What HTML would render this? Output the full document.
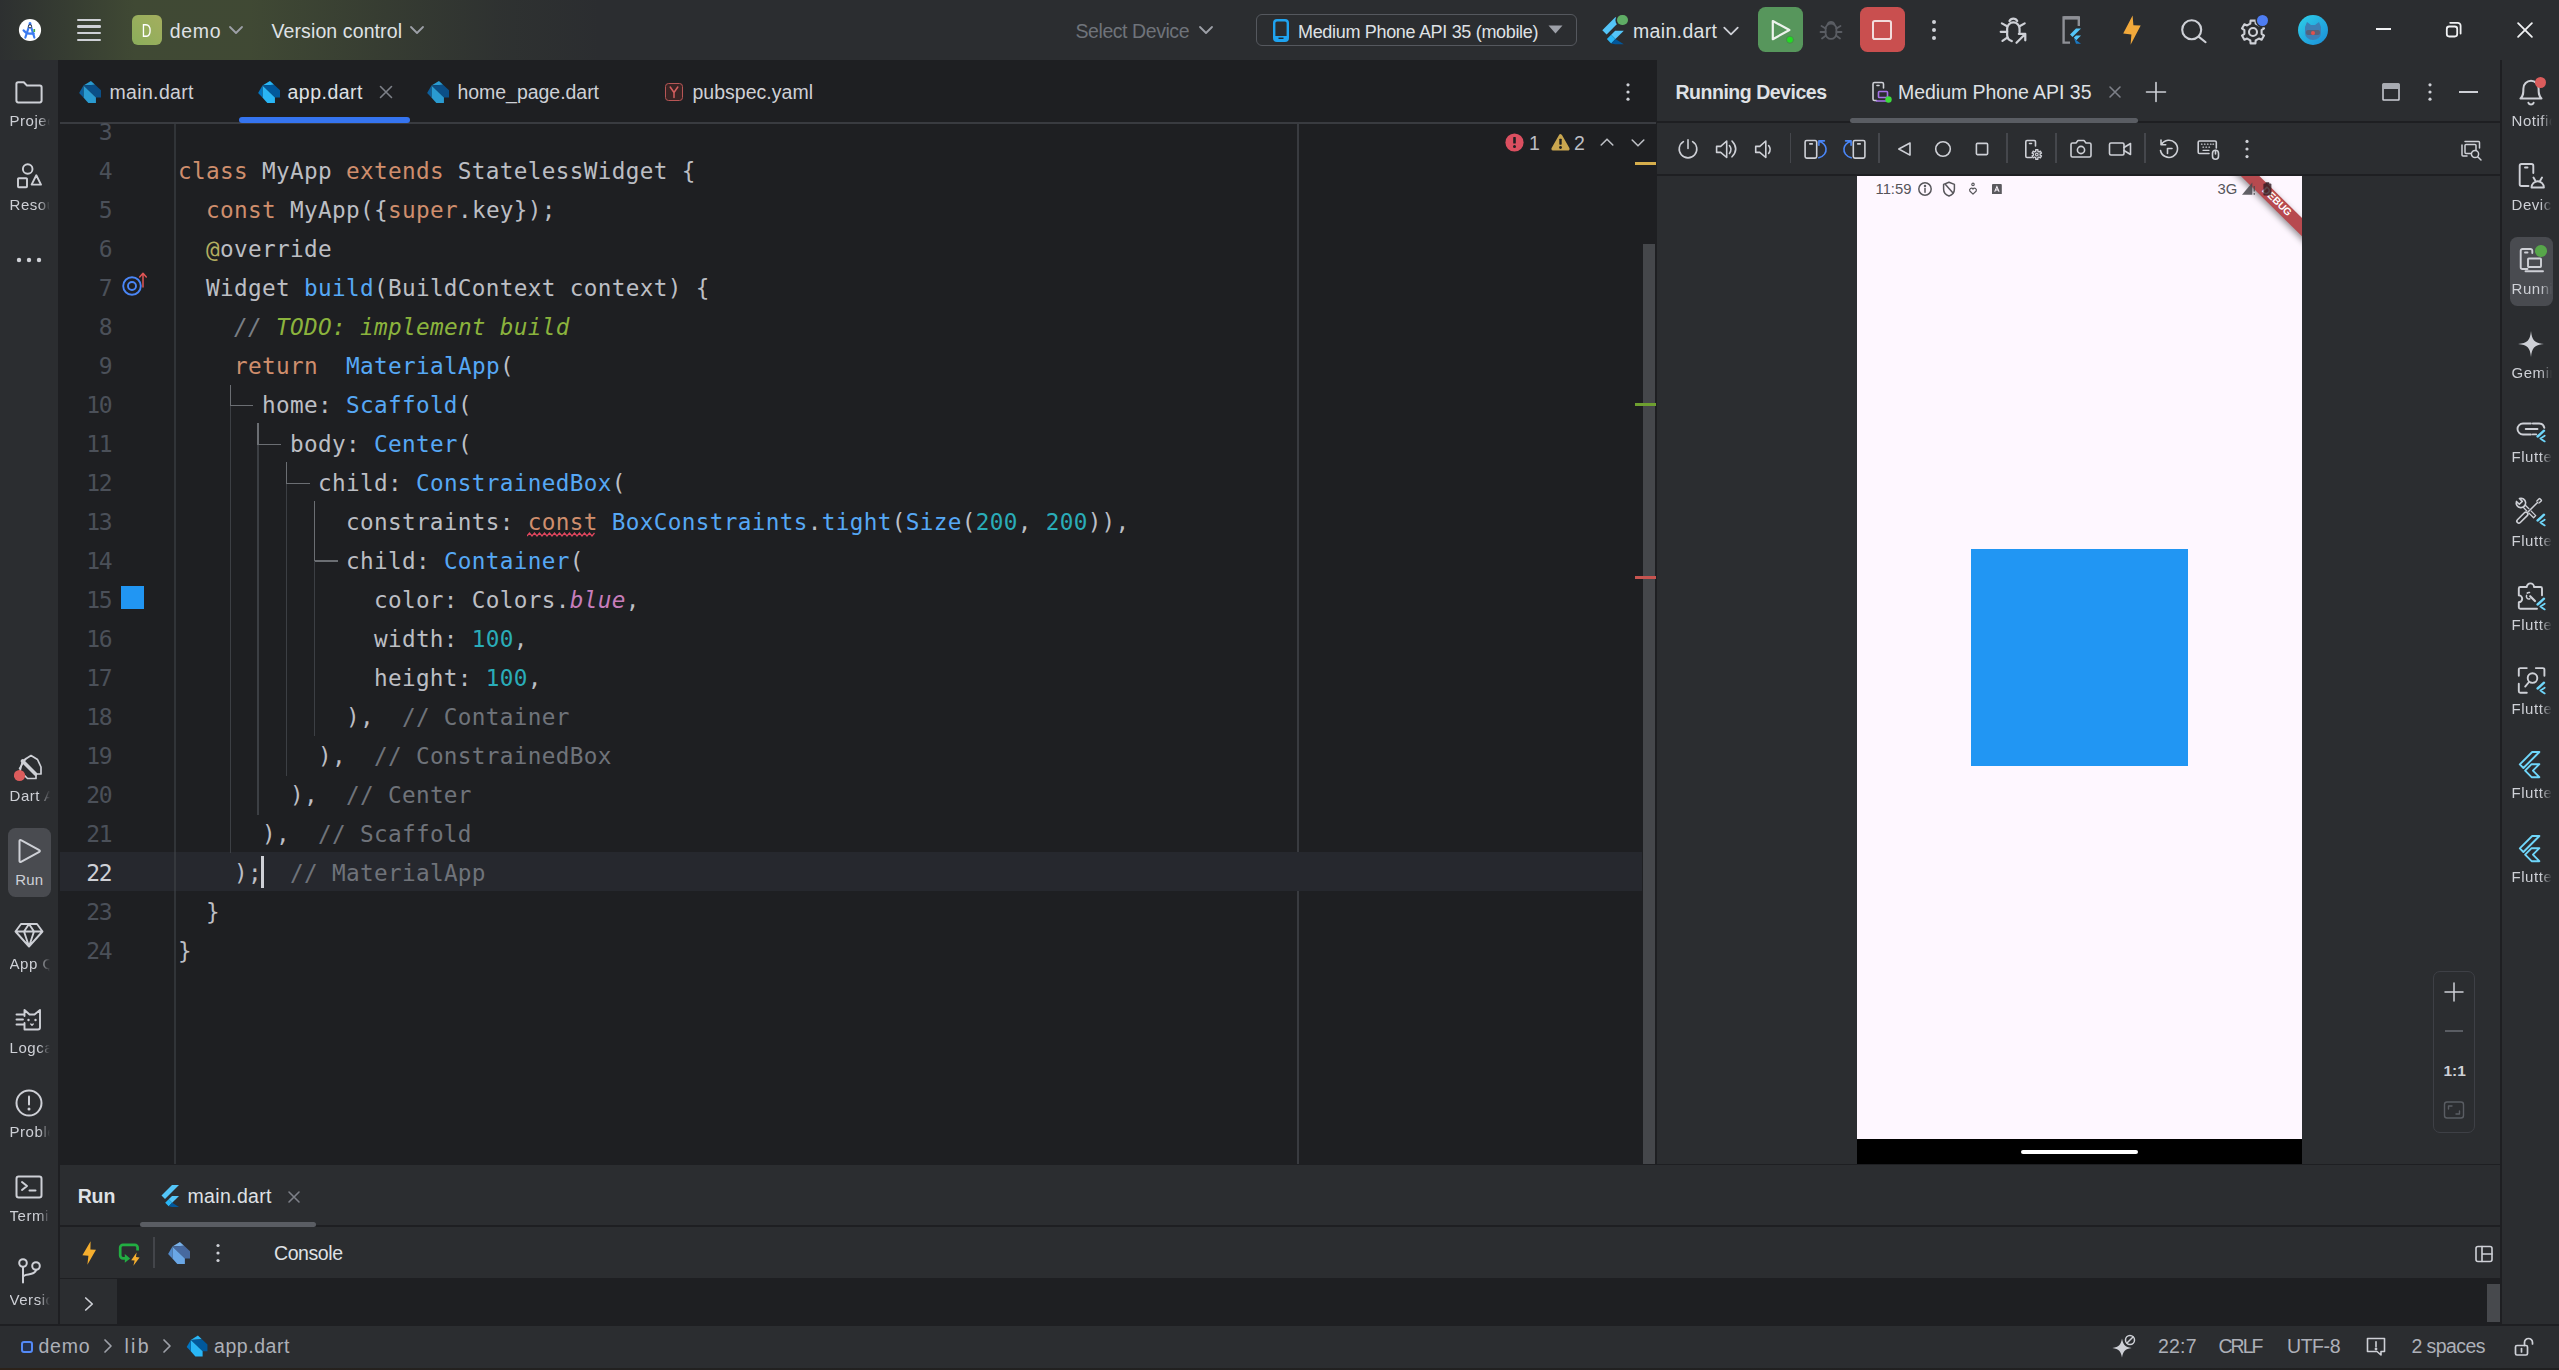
<!DOCTYPE html>
<html lang="en"><head><meta charset="utf-8"><title>demo – app.dart</title>
<style>
html,body{margin:0;padding:0;background:#2B2D30;}
body{width:2559px;height:1370px;position:relative;overflow:hidden;font-family:"Liberation Sans", "DejaVu Sans", sans-serif;font-size:19.5px;color:#DFE1E5;}
body div, body span.t, body svg, body pre{position:absolute;}
span.t{white-space:pre;}
pre{margin:0;font-family:"DejaVu Sans Mono", "Liberation Mono", monospace;font-size:22.7px;letter-spacing:0.334px;line-height:39px;white-space:pre;color:#BCBEC4;}
pre i{font-style:italic;}
pre b{font-weight:400;}
.k{color:#CF8E6D} .f{color:#56A8F5} .n{color:#2AACB8} .c{color:#7A7E85} .h{color:#6F737A} .td{color:#8BB33D} .a{color:#B3AE60} .p{color:#C77DBB}
</style></head>
<body>
<div style="left:0px;top:0px;width:2559px;height:60px;background:#2B2D30;"></div>
<div style="left:0px;top:0px;width:700px;height:60px;background:linear-gradient(90deg, rgba(68,80,52,0.08) 0px, rgba(68,80,52,0.4) 60px, rgba(69,80,53,0.8) 135px, rgba(69,80,53,0.8) 250px, rgba(66,76,52,0.5) 380px, rgba(60,68,52,0.2) 500px, rgba(55,60,52,0) 600px);"></div>
<div style="left:0px;top:60px;width:58px;height:1266px;background:#2B2D30;"></div>
<div style="left:58px;top:60px;width:2px;height:1266px;background:#1E1F22;"></div>
<div style="left:60px;top:60px;width:1596px;height:1104px;background:#1E1F22;"></div>
<div style="left:60px;top:122px;width:1596px;height:2px;background:#393B40;"></div>
<div style="left:1656px;top:60px;width:1px;height:1104px;background:#1E1F22;"></div>
<div style="left:1657px;top:60px;width:843px;height:1104px;background:#2B2D30;"></div>
<div style="left:1657px;top:121.2px;width:843px;height:1.8px;background:#1E1F22;"></div>
<div style="left:1657px;top:174px;width:843px;height:1.5px;background:#1E1F22;"></div>
<div style="left:2500px;top:60px;width:2px;height:1266px;background:#1E1F22;"></div>
<div style="left:2502px;top:60px;width:57px;height:1266px;background:#2B2D30;"></div>
<div style="left:60px;top:1164px;width:2440px;height:1px;background:#1E1F22;"></div>
<div style="left:60px;top:1165px;width:2440px;height:160px;background:#2B2D30;"></div>
<div style="left:60px;top:1225px;width:2440px;height:1.5px;background:#1E1F22;"></div>
<div style="left:60px;top:1277.5px;width:2440px;height:1.5px;background:#1E1F22;"></div>
<div style="left:117px;top:1278px;width:2383px;height:46px;background:#1E1F22;"></div>
<div style="left:0px;top:1324px;width:2559px;height:2px;background:#1E1F22;"></div>
<div style="left:0px;top:1326px;width:2559px;height:42px;background:#2B2D30;"></div>
<div style="left:0px;top:1368.3px;width:2559px;height:1.7px;background:linear-gradient(90deg,#2c2219 0,#222120 520px,#202021 100%);"></div>
<div style="left:132px;top:15px;width:30px;height:30px;border-radius:6px;background:linear-gradient(45deg,#8BAE5B,#A4AE5E);"></div>
<span class="t" style="left:140px;top:16.0px;line-height:30px;font-size:18.5px;color:#FFFFFF;transform:scaleX(0.72);transform-origin:50% 50%;">D</span>
<span class="t" style="left:169.7px;top:16.0px;line-height:30px;font-size:19.5px;color:#DFE1E5;letter-spacing:0.674px;">demo</span>
<span class="t" style="left:271.5px;top:16.0px;line-height:30px;font-size:19.5px;color:#DFE1E5;letter-spacing:0.108px;">Version control</span>
<span class="t" style="left:1075.5px;top:16.0px;line-height:30px;font-size:19.5px;color:#6F737A;letter-spacing:-0.435px;">Select Device</span>
<div style="left:1256px;top:14px;width:319px;height:30px;border:1.5px solid #55585E;border-radius:6px;"></div>
<span class="t" style="left:1298px;top:16.5px;line-height:30px;font-size:18px;color:#DFE1E5;letter-spacing:-0.32px;">Medium Phone API 35 (mobile)</span>
<span class="t" style="left:1633px;top:16.0px;line-height:30px;font-size:19.5px;color:#DFE1E5;letter-spacing:0.339px;">main.dart</span>
<div style="left:1758px;top:7.3px;width:44.8px;height:45px;border-radius:7.5px;background:#57965C;"></div>
<div style="left:1860px;top:7.3px;width:44.9px;height:45px;border-radius:7.5px;background:#C94F4F;"></div>
<span class="t" style="left:109.5px;top:77.4px;line-height:30px;font-size:19.5px;color:#CED0D6;letter-spacing:0.339px;">main.dart</span>
<span class="t" style="left:287.5px;top:77.4px;line-height:30px;font-size:19.5px;color:#DFE1E5;letter-spacing:0.492px;">app.dart</span>
<span class="t" style="left:457.5px;top:77.4px;line-height:30px;font-size:19.5px;color:#CED0D6;letter-spacing:-0.04px;">home_page.dart</span>
<span class="t" style="left:692.5px;top:77.4px;line-height:30px;font-size:19.5px;color:#CED0D6;letter-spacing:0.017px;">pubspec.yaml</span>
<div style="left:238.5px;top:117px;width:171px;height:5.5px;border-radius:3px;background:#3574F0;"></div>
<span class="t" style="left:1675.5px;top:77.4px;line-height:30px;font-size:19.5px;color:#DFE1E5;font-weight:700;letter-spacing:-0.479px;">Running Devices</span>
<span class="t" style="left:1898px;top:77.4px;line-height:30px;font-size:19.5px;color:#DFE1E5;letter-spacing:-0.03px;">Medium Phone API 35</span>
<div style="left:1850px;top:118px;width:288px;height:4.5px;border-radius:2.5px;background:#5A5D63;"></div>
<span class="t" style="left:77.7px;top:1181.0px;line-height:30px;font-size:19.5px;color:#DFE1E5;font-weight:700;letter-spacing:-0.153px;">Run</span>
<span class="t" style="left:187.5px;top:1181.0px;line-height:30px;font-size:19.5px;color:#DFE1E5;letter-spacing:0.339px;">main.dart</span>
<div style="left:140px;top:1222px;width:176px;height:4.5px;border-radius:2.5px;background:#5A5D63;"></div>
<div style="left:60px;top:1279px;width:57px;height:45px;background:#2B2D30;"></div>
<span class="t" style="left:274px;top:1238.0px;line-height:30px;font-size:19.5px;color:#DFE1E5;letter-spacing:-0.424px;">Console</span>
<span class="t" style="left:38.5px;top:1331.0px;line-height:30px;font-size:19.5px;color:#ADB0B8;letter-spacing:0.74px;">demo</span>
<span class="t" style="left:124.5px;top:1331.0px;line-height:30px;font-size:19.5px;color:#ADB0B8;letter-spacing:2.245px;">lib</span>
<span class="t" style="left:214px;top:1331.0px;line-height:30px;font-size:19.5px;color:#ADB0B8;letter-spacing:0.564px;">app.dart</span>
<span class="t" style="left:2158px;top:1331.0px;line-height:30px;font-size:19.5px;color:#ADB0B8;letter-spacing:0.182px;">22:7</span>
<span class="t" style="left:2218.5px;top:1331.0px;line-height:30px;font-size:19.5px;color:#ADB0B8;letter-spacing:-1.974px;">CRLF</span>
<span class="t" style="left:2287px;top:1331.0px;line-height:30px;font-size:19.5px;color:#ADB0B8;letter-spacing:-0.436px;">UTF-8</span>
<span class="t" style="left:2411.5px;top:1331.0px;line-height:30px;font-size:19.5px;color:#ADB0B8;letter-spacing:-0.578px;">2 spaces</span>
<div style="left:7.6px;top:828px;width:43.5px;height:69px;border-radius:7.5px;background:#494B50;"></div>
<span class="t" style="left:9.5px;top:108.5px;line-height:24px;font-size:15px;letter-spacing:0.55px;color:#CED0D6;width:40.0px;overflow:hidden;-webkit-mask-image:linear-gradient(90deg,#000 72%,transparent 100%);mask-image:linear-gradient(90deg,#000 72%,transparent 100%);">Project</span>
<span class="t" style="left:9.5px;top:192.5px;line-height:24px;font-size:15px;letter-spacing:0.55px;color:#CED0D6;width:40.0px;overflow:hidden;-webkit-mask-image:linear-gradient(90deg,#000 72%,transparent 100%);mask-image:linear-gradient(90deg,#000 72%,transparent 100%);">Resource</span>
<span class="t" style="left:9.5px;top:783.5px;line-height:24px;font-size:15px;letter-spacing:0.55px;color:#CED0D6;width:40.0px;overflow:hidden;-webkit-mask-image:linear-gradient(90deg,#000 72%,transparent 100%);mask-image:linear-gradient(90deg,#000 72%,transparent 100%);">Dart Analysis</span>
<span class="t" style="left:15.2px;top:867.5px;line-height:24px;font-size:15px;color:#CED0D6;letter-spacing:0.241px;">Run</span>
<span class="t" style="left:9.5px;top:951.5px;line-height:24px;font-size:15px;letter-spacing:0.55px;color:#CED0D6;width:40.0px;overflow:hidden;-webkit-mask-image:linear-gradient(90deg,#000 72%,transparent 100%);mask-image:linear-gradient(90deg,#000 72%,transparent 100%);">App Quality</span>
<span class="t" style="left:9.5px;top:1035.5px;line-height:24px;font-size:15px;letter-spacing:0.55px;color:#CED0D6;width:40.0px;overflow:hidden;-webkit-mask-image:linear-gradient(90deg,#000 72%,transparent 100%);mask-image:linear-gradient(90deg,#000 72%,transparent 100%);">Logcat</span>
<span class="t" style="left:9.5px;top:1119.5px;line-height:24px;font-size:15px;letter-spacing:0.55px;color:#CED0D6;width:40.0px;overflow:hidden;-webkit-mask-image:linear-gradient(90deg,#000 72%,transparent 100%);mask-image:linear-gradient(90deg,#000 72%,transparent 100%);">Problems</span>
<span class="t" style="left:9.5px;top:1203.5px;line-height:24px;font-size:15px;letter-spacing:0.55px;color:#CED0D6;width:40.0px;overflow:hidden;-webkit-mask-image:linear-gradient(90deg,#000 72%,transparent 100%);mask-image:linear-gradient(90deg,#000 72%,transparent 100%);">Terminal</span>
<span class="t" style="left:9.5px;top:1287.5px;line-height:24px;font-size:15px;letter-spacing:0.55px;color:#CED0D6;width:40.0px;overflow:hidden;-webkit-mask-image:linear-gradient(90deg,#000 72%,transparent 100%);mask-image:linear-gradient(90deg,#000 72%,transparent 100%);">Version</span>
<div style="left:2509.5px;top:237px;width:43.5px;height:69px;border-radius:7.5px;background:#494B50;"></div>
<span class="t" style="left:2511.5px;top:108.5px;line-height:24px;font-size:15px;letter-spacing:0.55px;color:#CED0D6;width:40px;overflow:hidden;-webkit-mask-image:linear-gradient(90deg,#000 72%,transparent 100%);mask-image:linear-gradient(90deg,#000 72%,transparent 100%);">Notifications</span>
<span class="t" style="left:2511.5px;top:192.5px;line-height:24px;font-size:15px;letter-spacing:0.55px;color:#CED0D6;width:40px;overflow:hidden;-webkit-mask-image:linear-gradient(90deg,#000 72%,transparent 100%);mask-image:linear-gradient(90deg,#000 72%,transparent 100%);">Device Manager</span>
<span class="t" style="left:2511.5px;top:276.5px;line-height:24px;font-size:15px;letter-spacing:0.55px;color:#CED0D6;width:40px;overflow:hidden;-webkit-mask-image:linear-gradient(90deg,#000 72%,transparent 100%);mask-image:linear-gradient(90deg,#000 72%,transparent 100%);">Running Devices</span>
<span class="t" style="left:2511.5px;top:360.5px;line-height:24px;font-size:15px;letter-spacing:0.55px;color:#CED0D6;width:40px;overflow:hidden;-webkit-mask-image:linear-gradient(90deg,#000 72%,transparent 100%);mask-image:linear-gradient(90deg,#000 72%,transparent 100%);">Gemini</span>
<span class="t" style="left:2511.5px;top:444.5px;line-height:24px;font-size:15px;letter-spacing:0.55px;color:#CED0D6;width:40px;overflow:hidden;-webkit-mask-image:linear-gradient(90deg,#000 72%,transparent 100%);mask-image:linear-gradient(90deg,#000 72%,transparent 100%);">Flutter Outline</span>
<span class="t" style="left:2511.5px;top:528.5px;line-height:24px;font-size:15px;letter-spacing:0.55px;color:#CED0D6;width:40px;overflow:hidden;-webkit-mask-image:linear-gradient(90deg,#000 72%,transparent 100%);mask-image:linear-gradient(90deg,#000 72%,transparent 100%);">Flutter Tools</span>
<span class="t" style="left:2511.5px;top:612.5px;line-height:24px;font-size:15px;letter-spacing:0.55px;color:#CED0D6;width:40px;overflow:hidden;-webkit-mask-image:linear-gradient(90deg,#000 72%,transparent 100%);mask-image:linear-gradient(90deg,#000 72%,transparent 100%);">Flutter Inspector</span>
<span class="t" style="left:2511.5px;top:696.5px;line-height:24px;font-size:15px;letter-spacing:0.55px;color:#CED0D6;width:40px;overflow:hidden;-webkit-mask-image:linear-gradient(90deg,#000 72%,transparent 100%);mask-image:linear-gradient(90deg,#000 72%,transparent 100%);">Flutter Perf</span>
<span class="t" style="left:2511.5px;top:780.5px;line-height:24px;font-size:15px;letter-spacing:0.55px;color:#CED0D6;width:40px;overflow:hidden;-webkit-mask-image:linear-gradient(90deg,#000 72%,transparent 100%);mask-image:linear-gradient(90deg,#000 72%,transparent 100%);">Flutter DevTools</span>
<span class="t" style="left:2511.5px;top:864.5px;line-height:24px;font-size:15px;letter-spacing:0.55px;color:#CED0D6;width:40px;overflow:hidden;-webkit-mask-image:linear-gradient(90deg,#000 72%,transparent 100%);mask-image:linear-gradient(90deg,#000 72%,transparent 100%);">Flutter Deep</span>
<div style="left:174px;top:124px;width:2px;height:1040px;background:#313438;"></div>
<div style="left:1297px;top:124px;width:2px;height:1040px;background:#393B40;"></div>
<div style="left:60px;top:852px;width:1582px;height:39px;background:#26282E;"></div>
<div style="left:174px;top:852px;width:2px;height:39px;background:#35383d;"></div>
<div style="left:1643px;top:244px;width:12px;height:920px;background:#45474B;"></div>
<div style="left:1635px;top:161.8px;width:21px;height:3.2px;background:#D6AE4C;"></div>
<div style="left:1635px;top:403.3px;width:21px;height:3px;background:#6FA030;"></div>
<div style="left:1635px;top:576px;width:21px;height:2.5px;background:#C75450;"></div>
<pre style="left:60px;width:51.3px;text-align:right;top:112.5px;font-size:23px;letter-spacing:-1.3px;"><b style="color:#4B5059">3</b>
<b style="color:#4B5059">4</b>
<b style="color:#4B5059">5</b>
<b style="color:#4B5059">6</b>
<b style="color:#4B5059">7</b>
<b style="color:#4B5059">8</b>
<b style="color:#4B5059">9</b>
<b style="color:#4B5059">10</b>
<b style="color:#4B5059">11</b>
<b style="color:#4B5059">12</b>
<b style="color:#4B5059">13</b>
<b style="color:#4B5059">14</b>
<b style="color:#4B5059">15</b>
<b style="color:#4B5059">16</b>
<b style="color:#4B5059">17</b>
<b style="color:#4B5059">18</b>
<b style="color:#4B5059">19</b>
<b style="color:#4B5059">20</b>
<b style="color:#4B5059">21</b>
<b style="color:#CED0D6">22</b>
<b style="color:#4B5059">23</b>
<b style="color:#4B5059">24</b></pre>
<pre style="left:178px;top:112.5px;"> 
<b class="k">class</b> MyApp <b class="k">extends</b> StatelessWidget {
  <b class="k">const</b> MyApp({<b class="k">super</b>.key});
  <b class="a">@</b>override
  Widget <b class="f">build</b>(BuildContext context) {
    <i class="c">// </i><i class="td">TODO: implement build</i>
    <b class="k">return</b>  <b class="f">MaterialApp</b>(
      home: <b class="f">Scaffold</b>(
        body: <b class="f">Center</b>(
          child: <b class="f">ConstrainedBox</b>(
            constraints: <b class="k sq">const</b> <b class="f">BoxConstraints</b>.<b class="f">tight</b>(<b class="f">Size</b>(<b class="n">200</b>, <b class="n">200</b>)),
            child: <b class="f">Container</b>(
              color: Colors.<i class="p">blue</i>,
              width: <b class="n">100</b>,
              height: <b class="n">100</b>,
            ),  <b class="h">// Container</b>
          ),  <b class="h">// ConstrainedBox</b>
        ),  <b class="h">// Center</b>
      ),  <b class="h">// Scaffold</b>
    );  <b class="h">// MaterialApp</b>
  }
}</pre>
<div style="left:261px;top:856px;width:2.5px;height:32px;background:#CED0D6;"></div>
<svg style="left:527px;top:532px;" width="70" height="6" viewBox="0 0 70 6" fill="none"><path d="M0 4 l2.5 -3 l2.5 3 l2.5 -3 l2.5 3 l2.5 -3 l2.5 3 l2.5 -3 l2.5 3 l2.5 -3 l2.5 3 l2.5 -3 l2.5 3 l2.5 -3 l2.5 3 l2.5 -3 l2.5 3 l2.5 -3 l2.5 3 l2.5 -3 l2.5 3 l2.5 -3 l2.5 3 l2.5 -3 l2.5 3 l2.5 -3 l2.5 3 l2.5 -3" stroke="#E0465E" stroke-width="1.2"/></svg>
<div style="left:229.5px;top:384.5px;width:1.5px;height:21.0px;background:#6B6E73;"></div>
<div style="left:229.5px;top:404.5px;width:23.0px;height:1.5px;background:#6B6E73;"></div>
<div style="left:229.5px;top:405.5px;width:1.5px;height:447.5px;background:#3C3F44;"></div>
<div style="left:257px;top:423px;width:1.5px;height:21.5px;background:#6B6E73;"></div>
<div style="left:257px;top:443.5px;width:23.5px;height:1.5px;background:#6B6E73;"></div>
<div style="left:257px;top:444.5px;width:1.5px;height:370.0px;background:#3C3F44;"></div>
<div style="left:285.5px;top:462px;width:1.5px;height:21.5px;background:#6B6E73;"></div>
<div style="left:285.5px;top:482.5px;width:24.0px;height:1.5px;background:#6B6E73;"></div>
<div style="left:285.5px;top:483.5px;width:1.5px;height:292.0px;background:#3C3F44;"></div>
<div style="left:313.5px;top:501px;width:1.5px;height:60px;background:#6B6E73;"></div>
<div style="left:313.5px;top:560px;width:24.0px;height:1.5px;background:#6B6E73;"></div>
<div style="left:313.5px;top:561px;width:1.5px;height:175px;background:#3C3F44;"></div>
<div style="left:121px;top:586px;width:23px;height:23px;background:#2196F3;"></div>
<span class="t" style="left:1529px;top:128.0px;line-height:30px;font-size:19.5px;color:#BCBEC4;">1</span>
<span class="t" style="left:1574px;top:128.0px;line-height:30px;font-size:19.5px;color:#BCBEC4;">2</span>
<div style="left:1857px;top:176px;width:445px;height:963px;background:#FEF7FF;"></div>
<div style="left:1857px;top:1139px;width:445px;height:24.5px;background:#000;"></div>
<div style="left:2021px;top:1150px;width:117px;height:4px;border-radius:2px;background:#fff;"></div>
<div style="left:1971px;top:549px;width:216.5px;height:217px;background:#2196F3;"></div>
<span class="t" style="left:1875.5px;top:178.5px;line-height:20px;font-size:14.8px;color:#55545A;">11:59</span>
<span class="t" style="left:2217.5px;top:178.5px;line-height:20px;font-size:14.8px;color:#55545A;">3G</span>
<div style="left:2433px;top:971px;width:40px;height:159.5px;border:1px solid #3E4046;border-radius:7px;"></div>
<span class="t" style="left:2443.5px;top:1061.0px;line-height:20px;font-size:15.5px;color:#CED0D6;font-weight:700;">1:1</span>
<div style="left:2487px;top:1284px;width:12.5px;height:38px;background:#47494D;"></div>
<svg style="left:18.1px;top:18px" width="24" height="24" viewBox="-12 -12 24 24"><circle r="11.1" fill="#fff"/><path d="M0 -6.6 L-4.7 7.6 M0 -6.6 L4.4 7.6" stroke="#3B7BF0" stroke-width="2.1" fill="none" stroke-linecap="round"/><path d="M-6.4 0.4 Q-4.2 3.6 -0.5 3.7 L3.6 3.5" stroke="#3B7BF0" stroke-width="2.3" fill="none" stroke-linecap="round"/><path d="M0 -7.6 V-6" stroke="#3B7BF0" stroke-width="2.4"/><circle cx="0" cy="-3.7" r="1.6" fill="#fff" stroke="#1F2430" stroke-width="0.9"/><rect x="3.4" y="-1" width="1.7" height="3" fill="#3DAD4B"/></svg>
<div style="left:76.5px;top:18.6px;width:24px;height:2.4px;border-radius:1.2px;background:#CED0D6;"></div>
<div style="left:76.5px;top:25.400000000000002px;width:24px;height:2.4px;border-radius:1.2px;background:#CED0D6;"></div>
<div style="left:76.5px;top:32.099999999999994px;width:24px;height:2.4px;border-radius:1.2px;background:#CED0D6;"></div>
<div style="left:76.5px;top:38.9px;width:24px;height:2.4px;border-radius:1.2px;background:#CED0D6;"></div>
<svg style="left:225.5px;top:20px;" width="20" height="20" viewBox="-10 -10 20 20" fill="none" stroke="#9DA0A8" stroke-width="1.8" stroke-linecap="round" stroke-linejoin="round"><polyline points="-6.0,-3.0 0,3.0 6.0,-3.0"/></svg>
<svg style="left:407px;top:20px;" width="20" height="20" viewBox="-10 -10 20 20" fill="none" stroke="#9DA0A8" stroke-width="1.8" stroke-linecap="round" stroke-linejoin="round"><polyline points="-6.0,-3.0 0,3.0 6.0,-3.0"/></svg>
<svg style="left:1196px;top:20px;" width="20" height="20" viewBox="-10 -10 20 20" fill="none" stroke="#9DA0A8" stroke-width="1.8" stroke-linecap="round" stroke-linejoin="round"><polyline points="-6.0,-3.0 0,3.0 6.0,-3.0"/></svg>
<svg style="left:1273px;top:18.5px" width="16" height="23" viewBox="0 0 16 23" fill="none"><rect x="1.2" y="1.2" width="13.6" height="20.6" rx="2.8" stroke="#1FA3F0" stroke-width="2.4"/><rect x="1.2" y="17" width="13.6" height="4.8" fill="#1FA3F0"/><rect x="5.5" y="18.6" width="5" height="1.3" fill="#1B1D20"/></svg>
<svg style="left:1548px;top:25px" width="15" height="9" viewBox="0 0 15 9"><polygon points="0.5,0.5 14.5,0.5 7.5,8.5" fill="#9DA0A8"/></svg>
<svg style="left:1597.64px;top:15.639999999999999px;" width="29.52" height="29.52" viewBox="-12 -12 24 24"><polygon points="2,-11 9,-11 -5,3 -8.5,-0.5" fill="#54C5F8" stroke="none"/><polygon points="2,0 9,0 2.2,6.8 -1.3,3.3" fill="#54C5F8" stroke="none"/><polygon points="-1.3,3.3 2.2,6.8 -1.3,10.3 -4.8,6.8" fill="#29B6F6" stroke="none"/><polygon points="2.2,6.8 9,11 2,11 -1.3,10.3" fill="#01579B" stroke="none"/></svg>
<div style="left:1617px;top:14.7px;width:10.8px;height:10.8px;border-radius:50%;background:#5FAD65;box-shadow:0 0 0 1.6px #2B2D30;"></div>
<svg style="left:1721px;top:21.3px;" width="20" height="20" viewBox="-10 -10 20 20" fill="none" stroke="#CED0D6" stroke-width="1.8" stroke-linecap="round" stroke-linejoin="round"><polyline points="-6.75,-3.4 0,3.4 6.75,-3.4"/></svg>
<svg style="left:1765.5px;top:15px;" width="30" height="30" viewBox="-15 -15 30 30" fill="none" stroke="#CED0D6" stroke-width="1.9" stroke-linecap="round" stroke-linejoin="round"><path d="M-8.2 -9 L8.4 0 L-8.2 9.2 Z" stroke="#EDF3ED" stroke-width="2.2" fill="none"/><circle cx="9" cy="9.7" r="3.6" fill="#22DD22" stroke="#4B8A50" stroke-width="1"/></svg>
<svg style="left:1816.3px;top:15px;" width="30" height="30" viewBox="-15 -15 30 30" fill="none" stroke="#5A5D63" stroke-width="1.8" stroke-linecap="round" stroke-linejoin="round"><path d="M-5.4 -1 a5.4 5.4 0 0 1 10.8 0 V3.5 a5.4 5.4 0 0 1 -10.8 0 Z"/><path d="M-3.4 -5.6 A3.6 3.6 0 0 1 3.4 -5.6 M-5.4 -1.5 L-9.5 -4 M5.4 -1.5 L9.5 -4 M-5.4 2 H-10.5 M5.4 2 H10.5 M-5 5.5 L-9 8.5 M5 5.5 L9 8.5"/></svg>
<div style="left:1871.8px;top:20.1px;width:16.1px;height:15.6px;border:2.3px solid #F2DCDC;border-radius:2.8px;"></div>
<svg style="left:1921.5px;top:18px;" width="24" height="24" viewBox="-12 -12 24 24" fill="none" stroke="#CED0D6" stroke-width="1.9" stroke-linecap="round" stroke-linejoin="round"><circle cx="0" cy="-8" r="2" fill="#CED0D6" stroke="none"/><circle cx="0" cy="0" r="2" fill="#CED0D6" stroke="none"/><circle cx="0" cy="8" r="2" fill="#CED0D6" stroke="none"/></svg>
<svg style="left:1995px;top:12.5px;" width="36" height="36" viewBox="-18 -18 36 36" fill="none" stroke="#CED0D6" stroke-width="1.9" stroke-linecap="round" stroke-linejoin="round"><g transform="scale(1.17)"><path d="M-3 -8.5 A3.6 3.6 0 0 1 3.6 -8.5"/><path d="M5.6 1 V-2 A5.3 5.3 0 0 0 -5 -2 V3.5 A5.3 5.3 0 0 0 -1 8.6"/><path d="M-5 -4 L-9.5 -6.5 M5.6 -4 L10 -6.5 M-5 0.7 H-10.5 M-4.6 5.5 L-9 8.5"/><path d="M3 10 L10.5 2.5 M5 2.5 H10.5 V8"/></g></svg>
<svg style="left:2056px;top:14px;" width="32" height="32" viewBox="-16 -16 32 32" fill="none" stroke="#CED0D6" stroke-width="1.9" stroke-linecap="round" stroke-linejoin="round"><path d="M6.8 -4 V-12.6 H-8.4 V12.6 H-2" stroke="#8E9096" stroke-width="2.4" stroke-linejoin="miter" stroke-linecap="butt"/><rect x="-8.4" y="-13.8" width="15.2" height="3.4" fill="#8E9096" stroke="none"/><polygon points="4,-1.4 9,-1.4 0.5,7.1 -2,4.6" fill="#54C5F8" stroke="none"/><polygon points="4,5.6 9,5.6 4.3,10.3 1.8,7.8" fill="#54C5F8" stroke="none"/><polygon points="1.8,7.8 4.3,10.3 9,13.8 4,13.8" fill="#1A78C2" stroke="none"/></svg>
<svg style="left:2115px;top:14px;" width="32" height="32" viewBox="-16 -16 32 32" fill="none" stroke="#CED0D6" stroke-width="1.9" stroke-linecap="round" stroke-linejoin="round"><polygon points="1.6,-14.5 -7.8,3.6 0.4,4.6 -0.4,14.7 9.7,-4.4 2.4,-4.8" fill="#F2A93B" stroke="none"/></svg>
<svg style="left:2177px;top:14px;" width="32" height="32" viewBox="-16 -16 32 32" fill="none" stroke="#CED0D6" stroke-width="2.1" stroke-linecap="round" stroke-linejoin="round"><circle cx="-1.3" cy="-0.2" r="9.5"/><path d="M5.6 6.6 L12.6 12.2"/></svg>
<svg style="left:2237px;top:15.8px;" width="32" height="32" viewBox="-16 -16 32 32" fill="none" stroke="#CED0D6" stroke-width="2.1" stroke-linecap="round" stroke-linejoin="round"><path d="M-2.41 -11.35 L2.41 -11.35 L2.72 -8.37 L5.89 -6.54 L8.62 -7.76 L11.03 -3.58 L8.61 -1.83 L8.61 1.83 L11.03 3.58 L8.62 7.76 L5.89 6.54 L2.72 8.37 L2.41 11.35 L-2.41 11.35 L-2.72 8.37 L-5.89 6.54 L-8.62 7.76 L-11.03 3.58 L-8.61 1.83 L-8.61 -1.83 L-11.03 -3.58 L-8.62 -7.76 L-5.89 -6.54 L-2.72 -8.37 Z" stroke-linejoin="round"/><circle r="4"/></svg>
<div style="left:2257.2px;top:15.2px;width:11.2px;height:11.2px;border-radius:50%;background:#4E7DF2;box-shadow:0 0 0 1.5px #2B2D30;"></div>
<svg style="left:2298px;top:15px" width="30" height="30" viewBox="-15 -15 30 30"><defs><linearGradient id="av" x1="0" y1="0" x2="1" y2="1"><stop offset="0" stop-color="#2FD0E8"/><stop offset="1" stop-color="#1A8CD8"/></linearGradient></defs><circle r="15" fill="url(#av)"/><path d="M-8 -3 L-6 -8 L-2 -5 H2 L6 -8 L8 -3 V3 A8 7 0 0 1 -8 3 Z" fill="#3D7FB5"/><rect x="-7" y="0" width="14" height="5" rx="2" fill="#56627A"/><circle cy="3" r="2" fill="#E2504C"/></svg>
<div style="left:2376px;top:27.8px;width:15.3px;height:2px;background:#F0F1F3;"></div>
<svg style="left:2438px;top:15px;" width="30" height="30" viewBox="-15 -15 30 30" fill="none" stroke="#F0F1F3" stroke-width="1.8" stroke-linecap="round" stroke-linejoin="round"><rect x="-6.2" y="-3.5" width="10.4" height="10" rx="2.4"/><path d="M-2.8 -7.2 H4.6 a3 3 0 0 1 3 3 V3.6"/></svg>
<svg style="left:2512.6px;top:17.5px;" width="24" height="24" viewBox="-12 -12 24 24" fill="none" stroke="#F0F1F3" stroke-width="1.8" stroke-linecap="round" stroke-linejoin="round"><path d="M-6.9 -6.9 L6.9 6.9 M6.9 -6.9 L-6.9 6.9"/></svg>
<svg style="left:77px;top:79px;" width="26" height="26" viewBox="-13 -13 26 26" fill="none" stroke="#CED0D6" stroke-width="1.9" stroke-linecap="round" stroke-linejoin="round"><polygon points="-6.56,-6.38 0.94,-11.00 5.12,-7.19" fill="#2A9BD1" stroke="none"/><polygon points="-6.56,-6.38 5.12,-7.19 11.00,-1.69 11.00,5.62 5.94,5.62" fill="#0B4F87" stroke="none"/><polygon points="-6.56,-6.38 5.94,5.62 5.94,10.94 -1.69,10.94 -6.56,5.62" fill="#2A9BD1" stroke="none"/><polygon points="-10.88,1.12 -6.56,-6.38 -6.56,5.62" fill="#0D5E9B" stroke="none"/></svg>
<svg style="left:256px;top:79px;" width="26" height="26" viewBox="-13 -13 26 26" fill="none" stroke="#CED0D6" stroke-width="1.9" stroke-linecap="round" stroke-linejoin="round"><polygon points="-6.56,-6.38 0.94,-11.00 5.12,-7.19" fill="#29B6F6" stroke="none"/><polygon points="-6.56,-6.38 5.12,-7.19 11.00,-1.69 11.00,5.62 5.94,5.62" fill="#01589B" stroke="none"/><polygon points="-6.56,-6.38 5.94,5.62 5.94,10.94 -1.69,10.94 -6.56,5.62" fill="#29B6F6" stroke="none"/><polygon points="-10.88,1.12 -6.56,-6.38 -6.56,5.62" fill="#0175C2" stroke="none"/></svg>
<svg style="left:425px;top:79px;" width="26" height="26" viewBox="-13 -13 26 26" fill="none" stroke="#CED0D6" stroke-width="1.9" stroke-linecap="round" stroke-linejoin="round"><polygon points="-6.56,-6.38 0.94,-11.00 5.12,-7.19" fill="#2A9BD1" stroke="none"/><polygon points="-6.56,-6.38 5.12,-7.19 11.00,-1.69 11.00,5.62 5.94,5.62" fill="#0B4F87" stroke="none"/><polygon points="-6.56,-6.38 5.94,5.62 5.94,10.94 -1.69,10.94 -6.56,5.62" fill="#2A9BD1" stroke="none"/><polygon points="-10.88,1.12 -6.56,-6.38 -6.56,5.62" fill="#0D5E9B" stroke="none"/></svg>
<svg style="left:377px;top:83px;" width="18" height="18" viewBox="-9 -9 18 18" fill="none" stroke="#7D8088" stroke-width="1.6" stroke-linecap="round" stroke-linejoin="round"><path d="M-5.5 -5.5 L5.5 5.5 M5.5 -5.5 L-5.5 5.5"/></svg>
<div style="left:665px;top:83px;width:15.5px;height:15.5px;border:1.5px solid #B85656;border-radius:3.5px;background:#392424;"></div>
<svg style="left:665.2px;top:83.2px;" width="18" height="18" viewBox="-9 -9 18 18" fill="none" stroke="#D65F5F" stroke-width="1.5" stroke-linecap="round" stroke-linejoin="round"><path d="M-3.8 -5 L0 0.5 L3.8 -5 M0 0.5 V5.5"/></svg>
<svg style="left:1616px;top:80px;" width="24" height="24" viewBox="-12 -12 24 24" fill="none" stroke="#CED0D6" stroke-width="1.9" stroke-linecap="round" stroke-linejoin="round"><circle cx="0" cy="-7.2" r="1.6" fill="#CED0D6" stroke="none"/><circle cx="0" cy="0" r="1.6" fill="#CED0D6" stroke="none"/><circle cx="0" cy="7.2" r="1.6" fill="#CED0D6" stroke="none"/></svg>
<svg style="left:14px;top:77px;" width="30" height="30" viewBox="-15 -15 30 30" fill="none" stroke="#CED0D6" stroke-width="2.0" stroke-linecap="round" stroke-linejoin="round"><path d="M-12.6 -8 a1.8 1.8 0 0 1 1.8 -1.8 h5.6 l3.2 3.4 h12.8 a1.8 1.8 0 0 1 1.8 1.8 v13.2 a1.8 1.8 0 0 1 -1.8 1.8 h-21.6 a1.8 1.8 0 0 1 -1.8 -1.8 z"/></svg>
<svg style="left:14px;top:161px;" width="30" height="30" viewBox="-15 -15 30 30" fill="none" stroke="#CED0D6" stroke-width="1.9" stroke-linecap="round" stroke-linejoin="round"><circle cx="-1.3" cy="-7" r="4.8"/><rect x="-11" y="2.3" width="9" height="9" rx="0.8"/><path d="M7.3 -0.7 L12 8.6 H2.6 Z"/></svg>
<svg style="left:14px;top:245px;" width="30" height="30" viewBox="-15 -15 30 30" fill="none" stroke="#CED0D6" stroke-width="1.9" stroke-linecap="round" stroke-linejoin="round"><circle cx="-10" cy="0" r="2.2" fill="#CED0D6" stroke="none"/><circle cx="0" cy="0" r="2.2" fill="#CED0D6" stroke="none"/><circle cx="10" cy="0" r="2.2" fill="#CED0D6" stroke="none"/></svg>
<svg style="left:14px;top:753px;" width="30" height="30" viewBox="-15 -15 30 30" fill="none" stroke="#CED0D6" stroke-width="1.9" stroke-linecap="round" stroke-linejoin="round"><path d="M-9 3 L-6.5 -7 L2 -12.5 L8.5 -8.5 L12 -1 V6 H7 V10.5 H-1.5 Z" stroke-width="1.7"/><path d="M-6.5 -7 L6.5 6" stroke-width="3.6"/><path d="M-3 -9.5 L-9.5 0.5" stroke-width="1.5"/><circle cx="-9.5" cy="7.5" r="5.6" fill="#DB5C5C" stroke="none"/></svg>
<svg style="left:14px;top:836px;" width="30" height="30" viewBox="-15 -15 30 30" fill="none" stroke="#CED0D6" stroke-width="2.0" stroke-linecap="round" stroke-linejoin="round"><path d="M-9.5 -10 a1 1 0 0 1 1.5 -0.9 L10.3 -0.9 a1 1 0 0 1 0 1.8 L-8 10.9 a1 1 0 0 1 -1.5 -0.9 Z"/></svg>
<svg style="left:14px;top:920px;" width="30" height="30" viewBox="-15 -15 30 30" fill="none" stroke="#CED0D6" stroke-width="1.9" stroke-linecap="round" stroke-linejoin="round"><path d="M-8 -11 H8 L13.5 -3.5 L0 11.5 L-13.5 -3.5 Z M-13.5 -3.5 H13.5 M-5 -3.5 L0 11.5 L5 -3.5 M-5 -3.5 L0 -11 L5 -3.5"/></svg>
<svg style="left:14px;top:1005px;" width="30" height="30" viewBox="-15 -15 30 30" fill="none" stroke="#CED0D6" stroke-width="1.9" stroke-linecap="round" stroke-linejoin="round"><path d="M-4 9.5 H9 a2 2 0 0 0 2 -2 V-10 L5.5 -5.5 H0.5 L-4.5 -10 V-4 M-4.5 3 V9.5"/><path d="M-12.5 -5.5 H-5 M-12.5 -0.5 H-6 M-12.5 4.5 H-5"/><circle cx="-0.5" cy="0" r="1.2" fill="#CED0D6" stroke="none"/><circle cx="6.5" cy="0" r="1.2" fill="#CED0D6" stroke="none"/><path d="M1.8 4 L3 5.2 L4.2 4" stroke-width="1.4"/></svg>
<svg style="left:14px;top:1088px;" width="30" height="30" viewBox="-15 -15 30 30" fill="none" stroke="#CED0D6" stroke-width="2.0" stroke-linecap="round" stroke-linejoin="round"><circle r="12.5"/><path d="M0 -6.5 V1.5"/><circle cy="6" r="1.5" fill="#CED0D6" stroke="none"/></svg>
<svg style="left:14px;top:1172px;" width="30" height="30" viewBox="-15 -15 30 30" fill="none" stroke="#CED0D6" stroke-width="2.0" stroke-linecap="round" stroke-linejoin="round"><rect x="-12.5" y="-10.5" width="25" height="21" rx="2.2"/><path d="M-7 -5 L-2 -1 L-7 3 M0.5 3.5 H6.5"/></svg>
<svg style="left:14px;top:1256px;" width="30" height="30" viewBox="-15 -15 30 30" fill="none" stroke="#CED0D6" stroke-width="2.0" stroke-linecap="round" stroke-linejoin="round"><circle cx="-6" cy="-8" r="3.8"/><circle cx="7" cy="-5" r="3.8"/><path d="M-6 -4 V11.5 M7 -1.2 C7 5 -6 2 -6 6"/></svg>
<svg style="left:1869px;top:80px;" width="24" height="24" viewBox="-12 -12 24 24" fill="none" stroke="#CED0D6" stroke-width="1.6" stroke-linecap="round" stroke-linejoin="round"><path d="M-4.5 8.5 H-6.5 a1.5 1.5 0 0 1 -1.5 -1.5 V-8 a1.5 1.5 0 0 1 1.5 -1.5 H1 a1.5 1.5 0 0 1 1.5 1.5 V-4" stroke="#CED0D6"/><path d="M-4 -6.5 H-2" stroke="#CED0D6"/><rect x="-2.5" y="-0.5" width="9" height="6" rx="0.8" stroke="#A571E6"/><path d="M-4.5 9 H8" stroke="#A571E6"/><circle cx="7.5" cy="7.5" r="3.2" fill="#3DDC3D" stroke="none"/></svg>
<svg style="left:2106px;top:83px;" width="18" height="18" viewBox="-9 -9 18 18" fill="none" stroke="#7D8088" stroke-width="1.6" stroke-linecap="round" stroke-linejoin="round"><path d="M-5 -5 L5 5 M5 -5 L-5 5"/></svg>
<svg style="left:2144px;top:80px;" width="24" height="24" viewBox="-12 -12 24 24" fill="none" stroke="#CED0D6" stroke-width="1.6" stroke-linecap="round" stroke-linejoin="round"><path d="M-9.5 0 H9.5 M0 -9.5 V9.5"/></svg>
<svg style="left:2379px;top:80px;" width="24" height="24" viewBox="-12 -12 24 24" fill="none" stroke="#CED0D6" stroke-width="1.5" stroke-linecap="round" stroke-linejoin="round"><rect x="-8" y="-8" width="16" height="16" rx="0.5"/><rect x="-8" y="-8" width="16" height="5" fill="#A8ABB2" stroke="none"/></svg>
<svg style="left:2418px;top:80px;" width="24" height="24" viewBox="-12 -12 24 24" fill="none" stroke="#CED0D6" stroke-width="1.9" stroke-linecap="round" stroke-linejoin="round"><circle cx="0" cy="-7.2" r="1.6" fill="#CED0D6" stroke="none"/><circle cx="0" cy="0" r="1.6" fill="#CED0D6" stroke="none"/><circle cx="0" cy="7.2" r="1.6" fill="#CED0D6" stroke="none"/></svg>
<div style="left:2459px;top:91.3px;width:19px;height:1.6px;background:#CED0D6;"></div>
<div style="left:1789.6px;top:133.3px;width:1.8px;height:29.5px;background:#45474C;"></div>
<div style="left:1878.1px;top:133.3px;width:1.8px;height:29.5px;background:#45474C;"></div>
<div style="left:2005.8px;top:133.3px;width:1.8px;height:29.5px;background:#45474C;"></div>
<div style="left:2054.7999999999997px;top:133.3px;width:1.8px;height:29.5px;background:#45474C;"></div>
<div style="left:2144.1px;top:133.3px;width:1.8px;height:29.5px;background:#45474C;"></div>
<svg style="left:1673px;top:134px;" width="30" height="30" viewBox="-15 -15 30 30" fill="none" stroke="#CED0D6" stroke-width="1.6" stroke-linecap="round" stroke-linejoin="round"><path d="M-4.6 -7.4 A8.8 8.8 0 1 0 4.6 -7.4 M0 -9.3 V-0.5"/></svg>
<svg style="left:1711px;top:134px;" width="30" height="30" viewBox="-15 -15 30 30" fill="none" stroke="#CED0D6" stroke-width="1.6" stroke-linecap="round" stroke-linejoin="round"><path d="M-9.4 -2.6 H-5.3 L0.7 -8 V8.5 L-5.3 3.4 H-9.4 Z M3.4 -3.4 Q6.6 0.5 3.4 4.4 M6 -8 Q13.4 0 6 7.8"/></svg>
<svg style="left:1748px;top:134px;" width="30" height="30" viewBox="-15 -15 30 30" fill="none" stroke="#CED0D6" stroke-width="1.6" stroke-linecap="round" stroke-linejoin="round"><path d="M-7.3 -2.6 H-3.2 L2.8 -8 V8.5 L-3.2 3.4 H-7.3 Z M5.6 -3.4 Q8.8 0.5 5.6 4.4"/></svg>
<svg style="left:1799.5px;top:134px;" width="30" height="30" viewBox="-15 -15 30 30" fill="none" stroke="#CED0D6" stroke-width="1.6" stroke-linecap="round" stroke-linejoin="round"><rect x="-9.9" y="-8.5" width="11.6" height="17.6" rx="1.6"/><path d="M-5.2 -5.1 H-2.7"/><path d="M3.8 8.7 C9 7.5 11.5 3.5 11 -0.5 C10.5 -4 8 -6.5 4.5 -7.6 M9.4 -8.1 H3.9 V-3.8" stroke="#4A86F7"/></svg>
<svg style="left:1839.5px;top:134px;" width="30" height="30" viewBox="-15 -15 30 30" fill="none" stroke="#CED0D6" stroke-width="1.6" stroke-linecap="round" stroke-linejoin="round"><rect x="-1.7" y="-8.5" width="11.6" height="17.6" rx="1.6"/><path d="M2.7 -5.1 H5.2"/><path d="M-3.8 8.7 C-9 7.5 -11.5 3.5 -11 -0.5 C-10.5 -4 -8 -6.5 -4.5 -7.6 M-9.4 -8.1 H-3.9 V-3.8" stroke="#4A86F7"/></svg>
<svg style="left:1888.5px;top:134px;" width="30" height="30" viewBox="-15 -15 30 30" fill="none" stroke="#CED0D6" stroke-width="1.6" stroke-linecap="round" stroke-linejoin="round"><path d="M6 -6 V6.1 L-5.2 0.05 Z"/></svg>
<svg style="left:1928px;top:134px;" width="30" height="30" viewBox="-15 -15 30 30" fill="none" stroke="#CED0D6" stroke-width="1.6" stroke-linecap="round" stroke-linejoin="round"><circle r="7.3"/></svg>
<svg style="left:1967.2px;top:134px;" width="30" height="30" viewBox="-15 -15 30 30" fill="none" stroke="#CED0D6" stroke-width="1.6" stroke-linecap="round" stroke-linejoin="round"><rect x="-5.6" y="-5.6" width="11.2" height="11.2" rx="1"/></svg>
<svg style="left:2018px;top:134px;" width="30" height="30" viewBox="-15 -15 30 30" fill="none" stroke="#CED0D6" stroke-width="1.6" stroke-linecap="round" stroke-linejoin="round"><path d="M-1.5 8.5 H-6 a1.2 1.2 0 0 1 -1.2 -1.2 V-7.3 a1.2 1.2 0 0 1 1.2 -1.2 H1.3 a1.2 1.2 0 0 1 1.2 1.2 V-3"/><path d="M-3.5 -5.5 H-1.5"/><g transform="translate(3.8,5.5)"><path d="M-1.12 -4.77 L1.12 -4.77 L1.09 -3.12 L2.16 -2.50 L3.57 -3.35 L4.69 -1.42 L3.24 -0.62 L3.24 0.62 L4.69 1.42 L3.57 3.35 L2.16 2.50 L1.09 3.12 L1.12 4.77 L-1.12 4.77 L-1.09 3.12 L-2.16 2.50 L-3.57 3.35 L-4.69 1.42 L-3.24 0.62 L-3.24 -0.62 L-4.69 -1.42 L-3.57 -3.35 L-2.16 -2.50 L-1.09 -3.12 Z" stroke-width="1.3"/><circle r="1.3" stroke-width="1.2"/></g></svg>
<svg style="left:2065.7px;top:134px;" width="30" height="30" viewBox="-15 -15 30 30" fill="none" stroke="#CED0D6" stroke-width="1.6" stroke-linecap="round" stroke-linejoin="round"><path d="M-10 -4.5 a1.5 1.5 0 0 1 1.5 -1.5 H-5 L-3 -8.5 H3 L5 -6 H8.5 a1.5 1.5 0 0 1 1.5 1.5 V6.5 a1.5 1.5 0 0 1 -1.5 1.5 H-8.5 a1.5 1.5 0 0 1 -1.5 -1.5 Z"/><circle cy="1" r="3.6"/></svg>
<svg style="left:2104.5px;top:134px;" width="30" height="30" viewBox="-15 -15 30 30" fill="none" stroke="#CED0D6" stroke-width="1.6" stroke-linecap="round" stroke-linejoin="round"><rect x="-10.5" y="-6" width="14.5" height="12" rx="1.5"/><path d="M4 -1.5 L10.5 -5.5 V5.5 L4 1.5"/></svg>
<svg style="left:2154px;top:134px;" width="30" height="30" viewBox="-15 -15 30 30" fill="none" stroke="#CED0D6" stroke-width="1.6" stroke-linecap="round" stroke-linejoin="round"><path d="M-7.5 -4.5 A8.6 8.6 0 1 1 -8.5 1.5 M-8 -9 V-4.3 H-3.3 M-1.5 -0.5 H3 M-1.5 -0.5 V4.5"/></svg>
<svg style="left:2193px;top:134px;" width="30" height="30" viewBox="-15 -15 30 30" fill="none" stroke="#CED0D6" stroke-width="1.6" stroke-linecap="round" stroke-linejoin="round"><path d="M1 4.5 H-8.5 a1.3 1.3 0 0 1 -1.3 -1.3 V-6.7 a1.3 1.3 0 0 1 1.3 -1.3 H7 a1.3 1.3 0 0 1 1.3 1.3 V-1"/><path d="M-6.5 -4.8 h0.5 M-3.5 -4.8 h0.5 M-0.5 -4.8 h0.5 M2.5 -4.8 h0.5 M5 -4.8 h0.5 M-5 -1.8 h0.5 M-2 -1.8 h0.5 M1 -1.8 h0.5 M-5 1.3 H1" stroke-width="1.3"/><rect x="4.5" y="1.2" width="6" height="9" rx="3"/><path d="M7.5 1.5 V5"/></svg>
<svg style="left:2235px;top:137px;" width="24" height="24" viewBox="-12 -12 24 24" fill="none" stroke="#CED0D6" stroke-width="1.9" stroke-linecap="round" stroke-linejoin="round"><circle cx="0" cy="-7.6" r="1.6" fill="#CED0D6" stroke="none"/><circle cx="0" cy="0" r="1.6" fill="#CED0D6" stroke="none"/><circle cx="0" cy="7.6" r="1.6" fill="#CED0D6" stroke="none"/></svg>
<svg style="left:2455.5px;top:134.5px;" width="30" height="30" viewBox="-15 -15 30 30" fill="none" stroke="#CED0D6" stroke-width="1.5" stroke-linecap="round" stroke-linejoin="round"><path d="M-4 6 H-8 a1 1 0 0 1 -1 -1 V-5 M-6 -8.5 H7.5 a1 1 0 0 1 1 1 V-2"/><path d="M-1 7.5 H-5 a1 1 0 0 1 -1 -1 V-4.5 a1 1 0 0 1 1 -1 H5" stroke-width="0"/><rect x="-6" y="-5.5" width="11" height="9" rx="1" stroke-width="1.5"/><circle cx="4" cy="4" r="3.6" fill="#2B2D30"/><path d="M6.7 6.7 L10 10"/></svg>
<svg style="left:1505.3px;top:132.9px" width="19" height="19" viewBox="-9.5 -9.5 19 19"><circle r="9.1" fill="#DB4F60"/><rect x="-1.3" y="-5.6" width="2.6" height="6.6" rx="0.6" fill="#1E1F22"/><circle cy="4" r="1.5" fill="#1E1F22"/></svg>
<svg style="left:1549.5px;top:132.6px" width="21" height="19" viewBox="-10.5 -9.5 21 19"><path d="M0 -6.6 L7.4 6.4 H-7.4 Z" fill="#C9A64F" stroke="#C9A64F" stroke-width="3.4" stroke-linejoin="round"/><rect x="-1.2" y="-3.8" width="2.4" height="6" rx="0.6" fill="#1E1F22"/><circle cy="5" r="1.4" fill="#1E1F22"/></svg>
<svg style="left:1597px;top:132.3px;" width="20" height="20" viewBox="-10 -10 20 20" fill="none" stroke="#BCBEC4" stroke-width="1.6" stroke-linecap="round" stroke-linejoin="round"><polyline points="-5.8,3 0,-2.8 5.8,3"/></svg>
<svg style="left:1627.8px;top:132.6px;" width="20" height="20" viewBox="-10 -10 20 20" fill="none" stroke="#BCBEC4" stroke-width="1.6" stroke-linecap="round" stroke-linejoin="round"><polyline points="-5.8,-3 0,2.8 5.8,-3"/></svg>
<svg style="left:120.80000000000001px;top:274.8px;" width="22" height="22" viewBox="-11 -11 22 22" fill="none" stroke="#CED0D6" stroke-width="1.9" stroke-linecap="round" stroke-linejoin="round"><circle r="8.8" stroke="#4A86F7" stroke-width="1.9"/><circle r="4" stroke="#4A86F7" stroke-width="1.9"/></svg>
<svg style="left:134px;top:271px;" width="18" height="18" viewBox="-9 -9 18 18" fill="none" stroke="#E05555" stroke-width="1.5" stroke-linecap="round" stroke-linejoin="round"><path d="M0 7 V-6.5 M-3.3 -3 L0 -6.8 L3.3 -3" /></svg>
<svg style="left:158.0px;top:1184.0px;" width="24.0" height="24.0" viewBox="-12 -12 24 24"><polygon points="2,-11 9,-11 -5,3 -8.5,-0.5" fill="#54C5F8" stroke="none"/><polygon points="2,0 9,0 2.2,6.8 -1.3,3.3" fill="#54C5F8" stroke="none"/><polygon points="-1.3,3.3 2.2,6.8 -1.3,10.3 -4.8,6.8" fill="#29B6F6" stroke="none"/><polygon points="2.2,6.8 9,11 2,11 -1.3,10.3" fill="#01579B" stroke="none"/></svg>
<svg style="left:285px;top:1188px;" width="18" height="18" viewBox="-9 -9 18 18" fill="none" stroke="#7D8088" stroke-width="1.6" stroke-linecap="round" stroke-linejoin="round"><path d="M-5 -5 L5 5 M5 -5 L-5 5"/></svg>
<svg style="left:74px;top:1238px;" width="30" height="30" viewBox="-15 -15 30 30" fill="none" stroke="#CED0D6" stroke-width="1.9" stroke-linecap="round" stroke-linejoin="round"><polygon points="1.6,-11.8 -6.6,2.2 -0.6,2.8 -1.6,11.8 7,-3.2 1.4,-3.6" fill="#F5AE2E" stroke="none"/></svg>
<svg style="left:113.5px;top:1238px;" width="30" height="30" viewBox="-15 -15 30 30" fill="none" stroke="#CED0D6" stroke-width="1.9" stroke-linecap="round" stroke-linejoin="round"><path d="M-3.5 5.4 H-6 a2.8 2.8 0 0 1 -2.8 -2.8 V-5.4 a2.8 2.8 0 0 1 2.8 -2.8 H5.8 a2.8 2.8 0 0 1 2.8 2.8 V-2.5" stroke="#22AE42" stroke-width="2.7" stroke-linecap="butt"/><polygon points="-4.2,1 1.2,5.4 -4.2,9.8" fill="#22AE42" stroke="none"/><polygon points="7.6,-0.6 2.2,7.2 5.6,7.6 4.4,12.8 10.6,4.4 7,4" fill="#F5AE2E" stroke="none"/></svg>
<div style="left:153.3px;top:1237px;width:1.4px;height:31px;background:#43454A;"></div>
<svg style="left:166.2px;top:1240.3px" width="26" height="26" viewBox="-13 -13 26 26"><polygon points="-6.6,-6.4 0.9,-11 5.1,-7.2" fill="#7AB2EA"/><polygon points="-6.6,-6.4 5.1,-7.2 11,-1.7 11,5.6 5.9,5.6" fill="#47699F"/><polygon points="-6.6,-6.4 5.9,5.6 5.9,10.9 -1.7,10.9 -6.6,5.6" fill="#6AA7E6"/><polygon points="-10.9,1.1 -6.6,-6.4 -6.6,5.6" fill="#5189C9"/></svg>
<svg style="left:206px;top:1241px;" width="24" height="24" viewBox="-12 -12 24 24" fill="none" stroke="#CED0D6" stroke-width="1.9" stroke-linecap="round" stroke-linejoin="round"><circle cx="0" cy="-7.5" r="1.6" fill="#CED0D6" stroke="none"/><circle cx="0" cy="0" r="1.6" fill="#CED0D6" stroke="none"/><circle cx="0" cy="7.5" r="1.6" fill="#CED0D6" stroke="none"/></svg>
<svg style="left:78.5px;top:1293.5px;" width="20" height="20" viewBox="-10 -10 20 20" fill="none" stroke="#CED0D6" stroke-width="1.7" stroke-linecap="round" stroke-linejoin="round"><polyline points="-3.25,-6.0 3.25,0 -3.25,6.0"/></svg>
<svg style="left:2472px;top:1241.5px;" width="24" height="24" viewBox="-12 -12 24 24" fill="none" stroke="#CED0D6" stroke-width="1.6" stroke-linecap="round" stroke-linejoin="round"><rect x="-8" y="-7.5" width="16" height="15" rx="2"/><path d="M-2 -7.5 V7.5 M-2 0 H8"/></svg>
<div style="left:20.8px;top:1340.6px;width:8.4px;height:8.4px;border:2px solid #548AF7;border-radius:3px;background:#25324D;"></div>
<svg style="left:97.5px;top:1336px;" width="20" height="20" viewBox="-10 -10 20 20" fill="none" stroke="#9DA0A8" stroke-width="1.7" stroke-linecap="round" stroke-linejoin="round"><polyline points="-3.0,-6.0 3.0,0 -3.0,6.0"/></svg>
<svg style="left:156.5px;top:1336px;" width="20" height="20" viewBox="-10 -10 20 20" fill="none" stroke="#9DA0A8" stroke-width="1.7" stroke-linecap="round" stroke-linejoin="round"><polyline points="-3.0,-6.0 3.0,0 -3.0,6.0"/></svg>
<svg style="left:184px;top:1333px;" width="26" height="26" viewBox="-13 -13 26 26" fill="none" stroke="#CED0D6" stroke-width="1.9" stroke-linecap="round" stroke-linejoin="round"><polygon points="-6.23,-6.06 0.89,-10.45 4.87,-6.83" fill="#29B6F6" stroke="none"/><polygon points="-6.23,-6.06 4.87,-6.83 10.45,-1.60 10.45,5.34 5.64,5.34" fill="#01589B" stroke="none"/><polygon points="-6.23,-6.06 5.64,5.34 5.64,10.39 -1.60,10.39 -6.23,5.34" fill="#29B6F6" stroke="none"/><polygon points="-10.33,1.07 -6.23,-6.06 -6.23,5.34" fill="#0175C2" stroke="none"/></svg>
<svg style="left:2110.3px;top:1335.6px;" width="24" height="24" viewBox="-12 -12 24 24" fill="none" stroke="#CED0D6" stroke-width="1.9" stroke-linecap="round" stroke-linejoin="round"><path d="M0 -9.6 C1.2 -3 3 -1.2 9.6 0 C3 1.2 1.2 3 0 9.6 C-1.2 3 -3 1.2 -9.6 0 C-3 -1.2 -1.2 -3 0 -9.6 Z" fill="#CED0D6" stroke="none"/></svg>
<svg style="left:2122.6px;top:1333.4px;" width="14" height="14" viewBox="-7 -7 14 14" fill="none" stroke="#CED0D6" stroke-width="1.5" stroke-linecap="round" stroke-linejoin="round"><circle r="4.5" fill="#2B2D30"/><path d="M-3 3 L3 -3"/></svg>
<svg style="left:2364px;top:1334px;" width="24" height="24" viewBox="-12 -12 24 24" fill="none" stroke="#CED0D6" stroke-width="1.6" stroke-linecap="round" stroke-linejoin="round"><path d="M-8.5 -7.5 H8.5 V5.5 H5 V9 L1 5.5 H-8.5 Z"/><path d="M0 -4.2 V0.5"/><circle cy="3" r="0.6" fill="#CED0D6"/></svg>
<svg style="left:2512px;top:1335px;" width="24" height="24" viewBox="-12 -12 24 24" fill="none" stroke="#CED0D6" stroke-width="1.7" stroke-linecap="round" stroke-linejoin="round"><rect x="-8.5" y="-1.5" width="12" height="9.5" rx="1.5"/><path d="M-2.5 1.5 V5"/><path d="M0.5 -1.5 V-4.5 a4 4 0 0 1 8 0 V-3"/></svg>
<svg style="left:2441.5px;top:980px;" width="24" height="24" viewBox="-12 -12 24 24" fill="none" stroke="#CED0D6" stroke-width="1.5" stroke-linecap="round" stroke-linejoin="round"><path d="M-9 0 H9 M0 -9 V9"/></svg>
<div style="left:2444.5px;top:1030.3px;width:18px;height:1.4px;background:#5A5D63;"></div>
<svg style="left:2441.5px;top:1098px;" width="24" height="24" viewBox="-12 -12 24 24" fill="none" stroke="#5A5D63" stroke-width="1.4" stroke-linecap="round" stroke-linejoin="round"><rect x="-9.5" y="-8" width="19" height="16" rx="2.5"/><path d="M-5.5 -1 V-4 H-2 M5.5 1 V4 H2"/></svg>
<div style="left:2222px;top:176px;width:80px;height:80px;overflow:hidden;"><div style="left:-1px;top:18.9px;width:110px;height:12.8px;background:#B74A4F;transform:rotate(44.6deg);transform-origin:50% 50%;box-shadow:0 2.5px 6px rgba(0,0,0,.42);"><span class="t" style="left:37.3px;top:0;line-height:12.8px;font-size:10.2px;font-weight:700;color:#FFFFFF;">DEBUG</span></div></div>
<svg style="left:1916px;top:179.7px;" width="18" height="18" viewBox="-9 -9 18 18" fill="none" stroke="#58575C" stroke-width="1.5" stroke-linecap="round" stroke-linejoin="round"><circle r="6.2"/><path d="M0 -0.5 V3.3"/><circle cy="-3" r="0.5" fill="#47464B"/></svg>
<svg style="left:1939.7px;top:179.7px;" width="18" height="18" viewBox="-9 -9 18 18" fill="none" stroke="#58575C" stroke-width="1.5" stroke-linecap="round" stroke-linejoin="round"><path d="M0 -6.8 L5.4 -4.6 V0 C5.4 3.5 3 6 0 7 C-3 6 -5.4 3.5 -5.4 0 V-4.6 Z"/><path d="M-3.5 -4.5 L4 4"/></svg>
<svg style="left:1963.5px;top:179.7px;" width="18" height="18" viewBox="-9 -9 18 18" fill="none" stroke="#58575C" stroke-width="1.2" stroke-linecap="round" stroke-linejoin="round"><circle cy="-4.6" r="1.2"/><path d="M0 5.2 L-3.2 2 a1.9 1.9 0 0 1 3.2 -2 a1.9 1.9 0 0 1 3.2 2 Z" stroke-width="1.2"/></svg>
<svg style="left:1991.8px;top:183.6px" width="9.8" height="10.6" viewBox="0 0 11 11" preserveAspectRatio="none"><rect width="11" height="11" rx="1" fill="#5A595E"/><path d="M3 8 L5.5 2.5 L8 8 M4 6.3 H7" stroke="#FEF7FF" stroke-width="1.1" fill="none"/></svg>
<svg style="left:2242px;top:182px" width="14" height="13" viewBox="0 0 14 13"><polygon points="0,12.8 10.3,12.8 10.3,0.6" fill="rgba(71,70,75,0.85)"/><rect x="11.6" y="4" width="1.3" height="5.5" fill="rgba(71,70,75,0.85)"/><rect x="11.6" y="11" width="1.3" height="1.8" fill="rgba(71,70,75,0.85)"/></svg>
<svg style="left:2262.5px;top:181.8px" width="9" height="14" viewBox="0 0 9 14"><rect x="0.4" y="1.6" width="8" height="12" rx="1" fill="rgba(50,26,32,0.8)"/><rect x="2.6" y="0.2" width="3.6" height="2" fill="rgba(50,26,32,0.8)"/></svg>
<svg style="left:2515.5px;top:76.5px;" width="30" height="30" viewBox="-15 -15 30 30" fill="none" stroke="#CED0D6" stroke-width="2.0" stroke-linecap="round" stroke-linejoin="round"><path d="M-10.5 6.5 H10.5 C7.6 3.8 7.6 1 7.6 -3.6 A7.6 7.6 0 0 0 -7.6 -3.6 C-7.6 1 -7.6 3.8 -10.5 6.5 Z"/><path d="M-2.6 10.8 A2.8 2.8 0 0 0 2.6 10.8"/></svg>
<div style="left:2534.5px;top:76.5px;width:11px;height:11px;border-radius:50%;background:#DB5C5C;"></div>
<svg style="left:2515.5px;top:161px;" width="30" height="30" viewBox="-15 -15 30 30" fill="none" stroke="#CED0D6" stroke-width="1.9" stroke-linecap="round" stroke-linejoin="round"><path d="M-2.5 10 H-9.5 a1.8 1.8 0 0 1 -1.8 -1.8 V-10.2 a1.8 1.8 0 0 1 1.8 -1.8 H0.5 a1.8 1.8 0 0 1 1.8 1.8 V-3"/><path d="M-6 -8.5 H-3.5"/><path d="M0.5 11.5 A6.2 6.2 0 0 1 12.9 11.5 Z M2.5 1.5 L4.5 5 M11 1.5 L9 5"/></svg>
<svg style="left:2515.5px;top:245px;" width="30" height="30" viewBox="-15 -15 30 30" fill="none" stroke="#CED0D6" stroke-width="1.9" stroke-linecap="round" stroke-linejoin="round"><path d="M-3.5 9 H-8.5 a1.8 1.8 0 0 1 -1.8 -1.8 V-9.2 a1.8 1.8 0 0 1 1.8 -1.8 H-0.5 a1.8 1.8 0 0 1 1.8 1.8 V-7"/><path d="M-6 -7.5 H-3.5"/><rect x="-3" y="-1.5" width="13" height="8.5" rx="0.8"/><path d="M-5.5 11.2 H12"/></svg>
<div style="left:2535.0px;top:245px;width:11.5px;height:11.5px;border-radius:50%;background:#57A64A;"></div>
<svg style="left:2515.5px;top:329px;" width="30" height="30" viewBox="-15 -15 30 30" fill="none" stroke="#CED0D6" stroke-width="1.9" stroke-linecap="round" stroke-linejoin="round"><path d="M0 -13 C1 -3.5 3.5 -1 13 0 C3.5 1 1 3.5 0 13 C-1 3.5 -3.5 1 -13 0 C-3.5 -1 -1 -3.5 0 -13 Z" fill="#CED0D6" stroke="none"/></svg>
<svg style="left:2514.5px;top:412.5px;" width="32" height="32" viewBox="-16 -16 32 32" fill="none" stroke="#CED0D6" stroke-width="1.9" stroke-linecap="round" stroke-linejoin="round"><path d="M-0.1 -5.5 H-8 a5.5 5.5 0 0 0 0 11 H-0.1"/><path d="M1.8 -5.5 H8 A5.5 5.5 0 0 1 13.3 -1.2"/><path d="M-5.3 0 H6.5"/><path d="M1.7 5.4 H5.2"/></svg>
<svg style="left:2514.5px;top:412.5px;" width="32" height="32" viewBox="-16 -16 32 32" fill="none" stroke="#6FD6FA" stroke-width="1.9" stroke-linecap="round" stroke-linejoin="round"><path d="M13 1.7 L6.6 7.5" stroke-width="2.4"/><path d="M13.7 6.8 L9.4 9.6 L13.7 12.4" stroke-width="1.8"/></svg>
<svg style="left:2511.3px;top:493.4px;" width="36" height="36" viewBox="-18 -18 36 36" fill="none" stroke="#CED0D6" stroke-width="1.6" stroke-linecap="round" stroke-linejoin="round"><g transform="rotate(-45)"><path d="M-2.1 -15.6 A4.7 4.7 0 1 0 2.1 -15.6 V-11.6 H-2.1 Z" stroke-width="1.6"/><rect x="-1.5" y="-7" width="3" height="15" stroke-width="1.3"/></g><g transform="rotate(45)"><rect x="-1.5" y="-16.4" width="3" height="4" rx="0.6" stroke-width="1.4"/><path d="M0 -12.4 V2.5" stroke-width="2.4" stroke="#2B2D30"/><path d="M0 -12.4 V2.5" stroke-width="1.5"/><rect x="-2" y="2.5" width="4" height="13.8" rx="2" stroke-width="1.6" fill="#2B2D30"/></g></svg>
<svg style="left:2514.5px;top:496.5px;" width="32" height="32" viewBox="-16 -16 32 32" fill="none" stroke="#6FD6FA" stroke-width="1.9" stroke-linecap="round" stroke-linejoin="round"><path d="M13 1.7 L6.6 7.5" stroke-width="2.4"/><path d="M13.7 6.8 L9.4 9.6 L13.7 12.4" stroke-width="1.8"/></svg>
<svg style="left:2514.5px;top:580.5px;" width="32" height="32" viewBox="-16 -16 32 32" fill="none" stroke="#CED0D6" stroke-width="1.9" stroke-linecap="round" stroke-linejoin="round"><path d="M11 -1.8 V-8.5 a1.5 1.5 0 0 0 -1.5 -1.5 H3 a3.6 3.6 0 0 0 -7.2 0 H-10.7 a1.5 1.5 0 0 0 -1.5 1.5 V-1.6 a3.4 3.4 0 0 1 0 6.8 V10.3 a1.5 1.5 0 0 0 1.5 1.5 H6"/><path d="M-0.8 -0.8 L4 4" stroke-width="2.2"/><path d="M-4.4 -1.6 a2.5 2.5 0 0 0 3.3 3.3 M-1.5 -4.5 a2.5 2.5 0 0 0 -2.3 0.6" stroke-width="1.5"/></svg>
<svg style="left:2514.5px;top:580.5px;" width="32" height="32" viewBox="-16 -16 32 32" fill="none" stroke="#6FD6FA" stroke-width="1.9" stroke-linecap="round" stroke-linejoin="round"><path d="M13 1.7 L6.6 7.5" stroke-width="2.4"/><path d="M13.7 6.8 L9.4 9.6 L13.7 12.4" stroke-width="1.8"/></svg>
<svg style="left:2514.5px;top:664.5px;" width="32" height="32" viewBox="-16 -16 32 32" fill="none" stroke="#CED0D6" stroke-width="1.9" stroke-linecap="round" stroke-linejoin="round"><path d="M-12.2 -5.3 V-11.4 a1.5 1.5 0 0 1 1.5 -1.5 H-4.2 M4.8 -12.9 H11.9 a1.5 1.5 0 0 1 1.5 1.5 V-5.3 M-12.2 2.8 V10.3 a1.5 1.5 0 0 0 1.5 1.5 H-4.2"/><circle cx="1.5" cy="-2.9" r="4.8"/><path d="M-2 1 L-5.8 5.6"/></svg>
<svg style="left:2514.5px;top:664.5px;" width="32" height="32" viewBox="-16 -16 32 32" fill="none" stroke="#6FD6FA" stroke-width="1.9" stroke-linecap="round" stroke-linejoin="round"><path d="M13 1.7 L6.6 7.5" stroke-width="2.4"/><path d="M13.7 6.8 L9.4 9.6 L13.7 12.4" stroke-width="1.8"/></svg>
<svg style="left:2514.5px;top:748.5px;" width="32" height="32" viewBox="-16 -16 32 32" fill="none" stroke="#6FD6FA" stroke-width="1.9" stroke-linecap="round" stroke-linejoin="round"><path d="M1.2 -13 H8.4 L-7.6 3 L-11.2 -0.6 Z"/><path d="M0.6 -0.8 H8.4 L1.9 5.7 L8.4 12.2 H0.6 L-5.9 5.7 Z"/></svg>
<svg style="left:2514.5px;top:832.5px;" width="32" height="32" viewBox="-16 -16 32 32" fill="none" stroke="#6FD6FA" stroke-width="1.9" stroke-linecap="round" stroke-linejoin="round"><path d="M1.2 -13 H8.4 L-7.6 3 L-11.2 -0.6 Z"/><path d="M0.6 -0.8 H8.4 L1.9 5.7 L8.4 12.2 H0.6 L-5.9 5.7 Z"/></svg>
</body></html>
